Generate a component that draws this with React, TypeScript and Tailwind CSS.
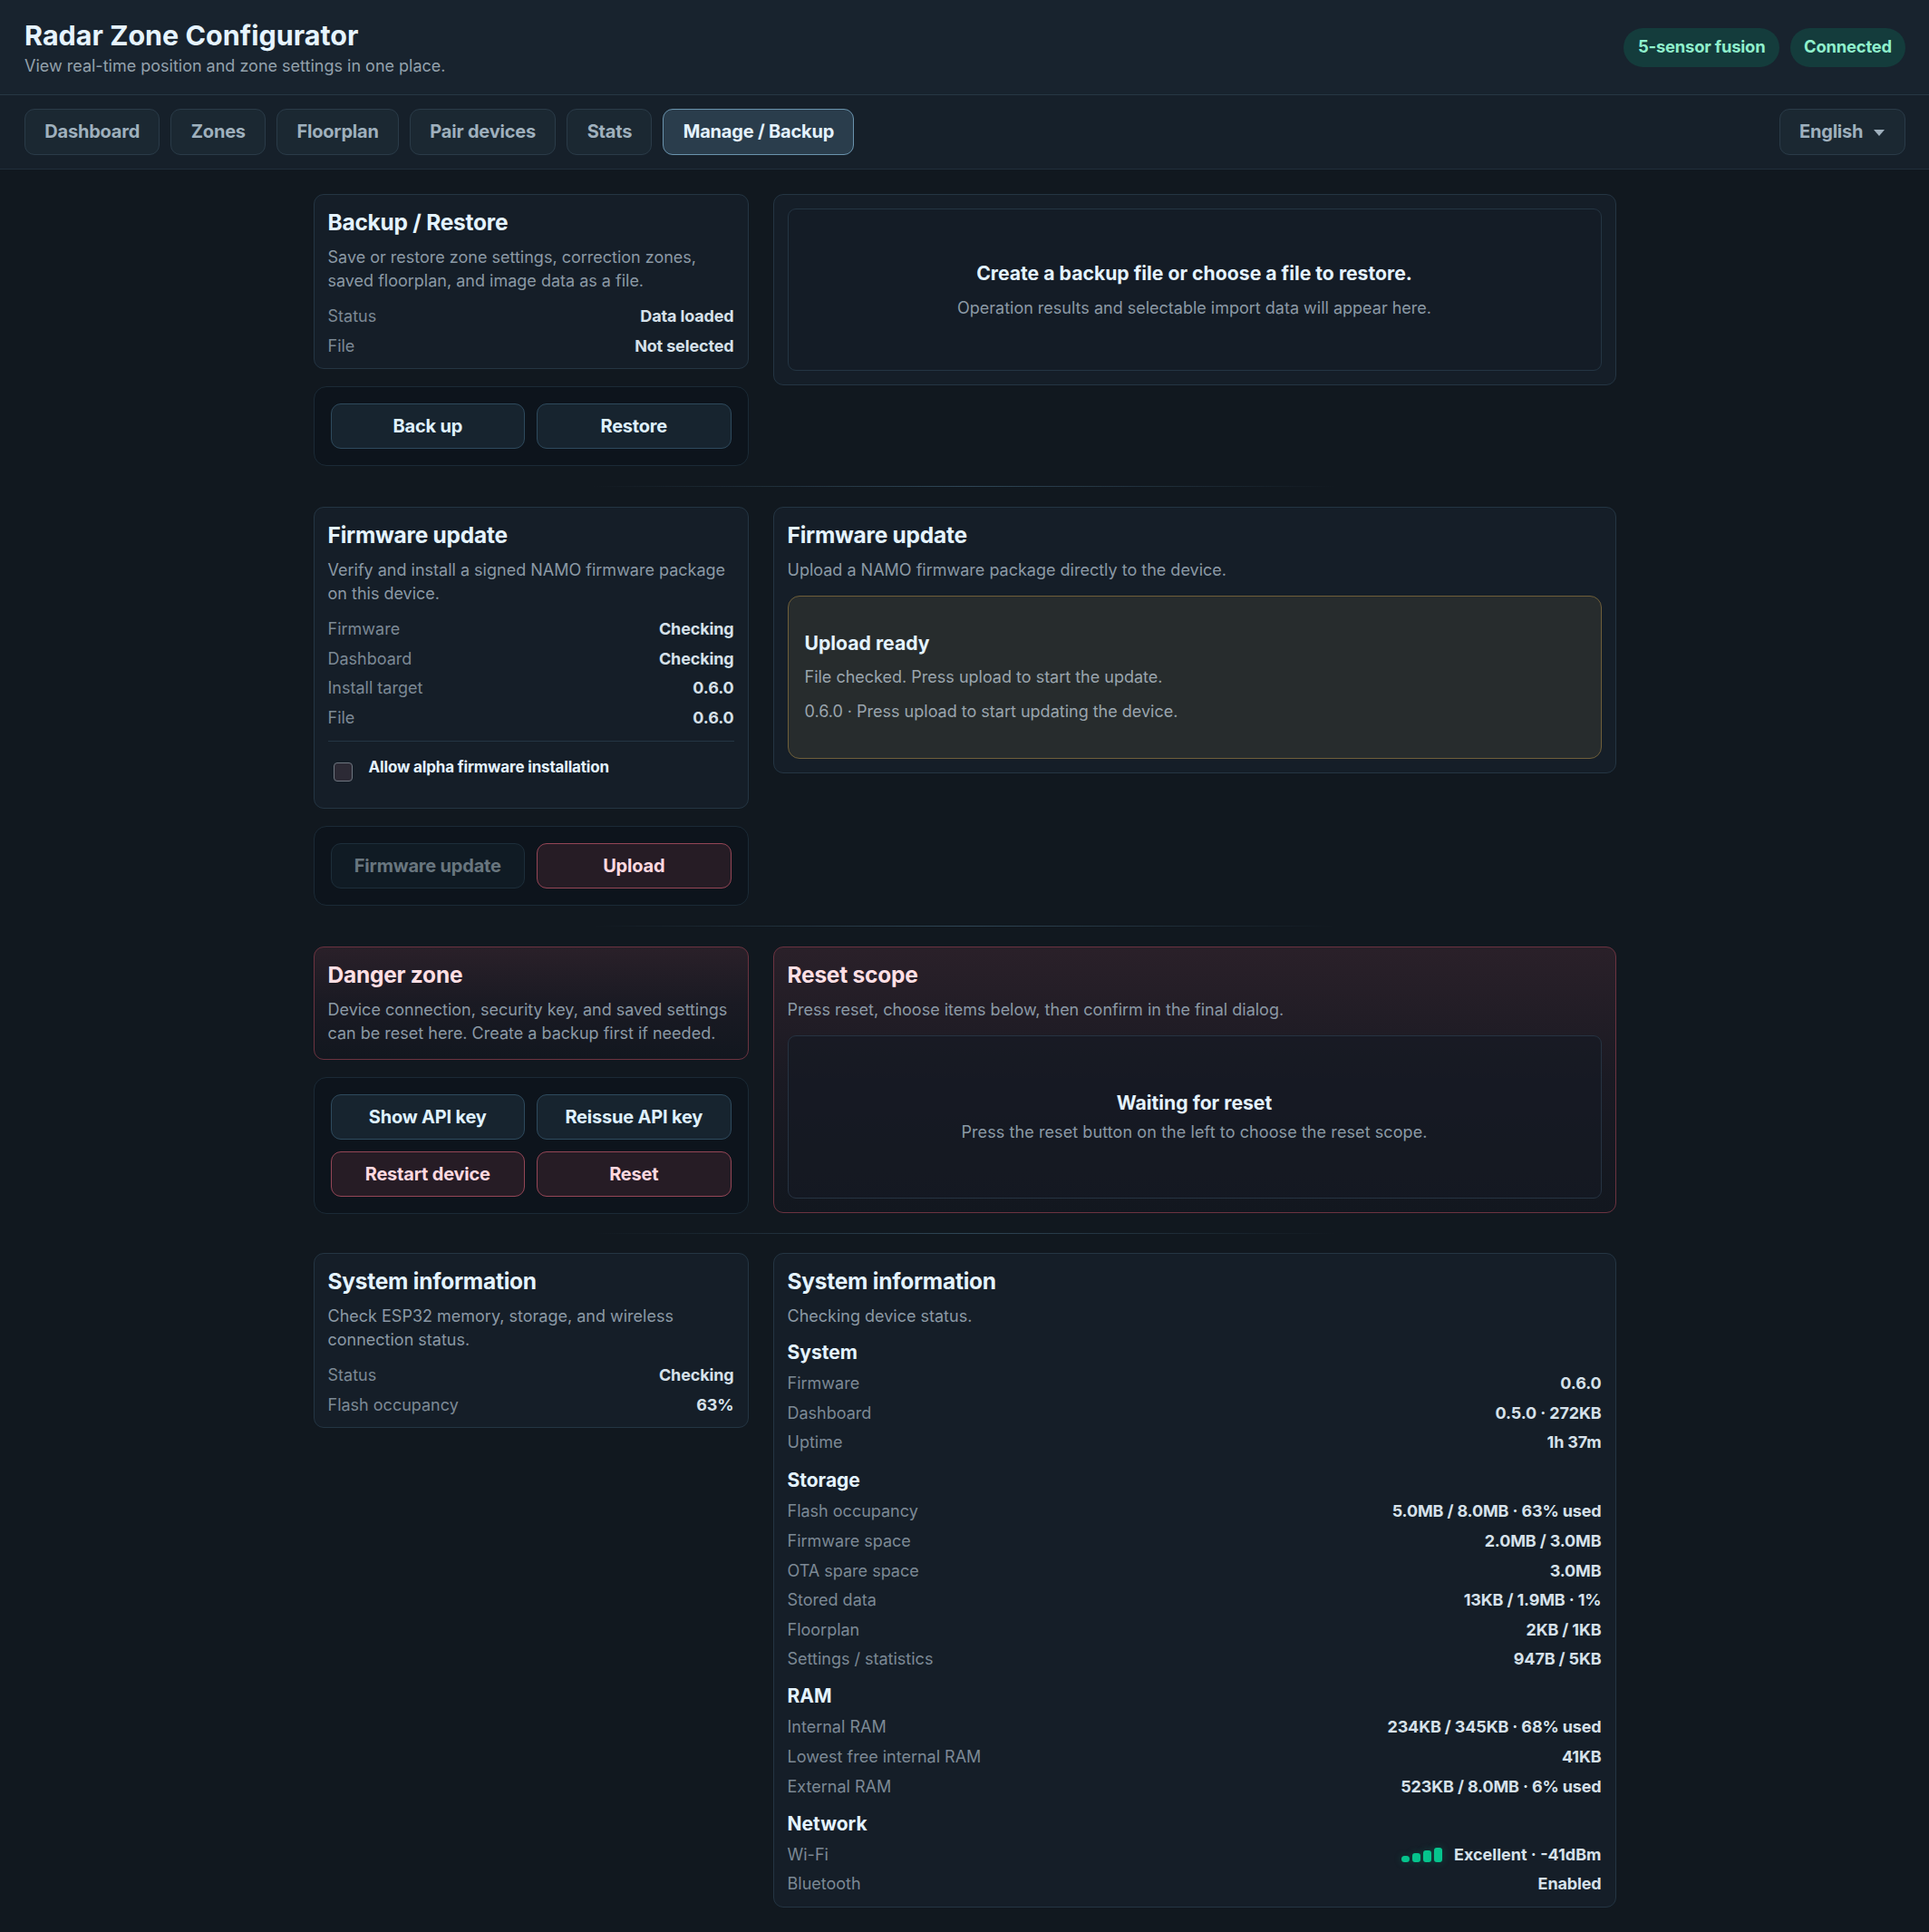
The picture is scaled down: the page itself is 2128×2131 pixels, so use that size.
import { ReactNode } from "react"

const tabs = ["Dashboard", "Zones", "Floorplan", "Pair devices", "Stats", "Manage / Backup"]

function Card({ danger, className = "", children }: { danger?: boolean; className?: string; children: ReactNode }) {
  return (
    <div
      className={`rounded-[11px] border p-[15px] ${
        danger
          ? "border-[#6b3340] bg-gradient-to-b from-[#2a2029] via-[#1a1a23] to-[#12171f]"
          : "border-[#243543] bg-[#151e28]"
      } ${className}`}
    >
      {children}
    </div>
  )
}

function Title({ danger, children }: { danger?: boolean; children: ReactNode }) {
  return (
    <h2 className={`text-[24.5px] leading-[30px] font-bold tracking-[-0.01em] ${danger ? "text-[#ffdfe4]" : "text-[#e4f3ff]"}`}>
      {children}
    </h2>
  )
}

function Desc({ children }: { children: ReactNode }) {
  return <p className="mt-[11px] text-[18px] leading-[26px] text-[#8b99a5]">{children}</p>
}

function Row({ label, children }: { label: string; children: ReactNode }) {
  return (
    <div className="flex h-[20px] items-center justify-between text-[18px] leading-[20px]">
      <span className="text-[#7c8995]">{label}</span>
      <span className="flex items-center font-bold tracking-[-0.008em] text-[#d6e1ea]">{children}</span>
    </div>
  )
}

function Rows({ children, className = "" }: { children: ReactNode; className?: string }) {
  return <div className={`flex flex-col gap-[12.6px] ${className}`}>{children}</div>
}

function Btn({ kind = "normal", children }: { kind?: "normal" | "danger" | "off"; children: ReactNode }) {
  const tone =
    kind === "danger"
      ? "border-[#944656] bg-[#261c25] text-[#ffd9e0]"
      : kind === "off"
        ? "border-[#1d2e3a] bg-[#101b24] text-[#69767f]"
        : "border-[#2e4a5d] bg-[#17242f] text-[#dff1ff]"
  return (
    <button type="button" className={`h-[50px] rounded-[11px] border text-[20px] font-bold tracking-[-0.01em] ${tone}`}>
      {children}
    </button>
  )
}

function Actions({ children }: { children: ReactNode }) {
  return (
    <div className="grid grid-cols-2 gap-[13px] rounded-[14px] border border-[#1b2a36] bg-[#0d141c] p-[18px]">
      {children}
    </div>
  )
}

function Section({ left, right }: { left: ReactNode; right: ReactNode }) {
  return (
    <div className="grid grid-cols-[480px_930px] items-start gap-[27px]">
      <div className="flex flex-col gap-[19px]">{left}</div>
      <div>{right}</div>
    </div>
  )
}

function Divider({ className = "my-[22px]" }: { className?: string }) {
  return (
    <div className={`mx-auto h-px w-[820px] bg-gradient-to-r from-transparent via-[#2f4656] to-transparent ${className}`} />
  )
}

function Signal() {
  return (
    <span className="mr-[13px] flex items-end gap-[3px]">
      <span className="h-[7px] w-[9px] rounded-[4px] bg-[#06c48d] shadow-[0_0_8px_rgba(6,196,141,0.25)]" />
      <span className="h-[10px] w-[9px] rounded-[3px] bg-[#06c48d] shadow-[0_0_8px_rgba(6,196,141,0.25)]" />
      <span className="h-[13px] w-[9px] rounded-[3px] bg-[#06c48d] shadow-[0_0_8px_rgba(6,196,141,0.25)]" />
      <span className="h-[16px] w-[9px] rounded-[3px] bg-[#06c48d] shadow-[0_0_8px_rgba(6,196,141,0.25)]" />
    </span>
  )
}

function Group({ title, className, children }: { title: string; className: string; children: ReactNode }) {
  return (
    <div className={className}>
      <h3 className="text-[21px] leading-[28px] font-bold text-[#e4f3ff]">{title}</h3>
      <Rows className="mt-[10px]">{children}</Rows>
    </div>
  )
}

export default function App() {
  return (
    <div className="min-h-[2131px] bg-[#11181f] font-['Inter',sans-serif]">
      <header className="flex h-[105px] items-center justify-between border-b border-[#263744] bg-[#18232e] pr-[26px] pl-[27px]">
        <div className="mt-[2px]">
          <h1 className="text-[30.5px] leading-[36px] font-bold text-[#e6f4ff]">Radar Zone Configurator</h1>
          <p className="mt-[3px] text-[18px] leading-[26px] text-[#93a1ac]">View real-time position and zone settings in one place.</p>
        </div>
        <div className="flex gap-[12px]">
          <span className="flex h-[43px] items-center rounded-full bg-[#143c3c] px-[15.5px] text-[18.4px] font-bold tracking-[-0.01em] text-[#8ff0cc]">
            5-sensor fusion
          </span>
          <span className="flex h-[43px] items-center rounded-full bg-[#143c3c] px-[15px] text-[18.4px] font-bold tracking-[-0.01em] text-[#8ff0cc]">
            Connected
          </span>
        </div>
      </header>

      <nav className="flex items-center justify-between border-b border-[#212f3b] bg-[#16202a] py-[15px] pr-[26px] pl-[27px]">
        <div className="flex gap-[12px]">
          {tabs.map((tab) => (
            <button
              key={tab}
              type="button"
              className={`h-[51px] rounded-[11px] border px-[21.3px] pb-[1px] text-[20px] font-bold tracking-[-0.01em] ${
                tab === "Manage / Backup"
                  ? "border-[#6a93ad] bg-[#2a3d4c] text-[#e4f2ff]"
                  : "border-[#2a3b48] bg-[#1b2832] text-[#9fb0bd]"
              }`}
            >
              {tab}
            </button>
          ))}
        </div>
        <button
          type="button"
          className="flex h-[51px] w-[139px] items-center rounded-[11px] border border-[#2a3b48] bg-[#1b2832] pb-[1px] pl-[21px] text-[20px] font-bold tracking-[-0.01em] text-[#9fb0bd]"
        >
          English
          <svg className="mt-[2px] ml-[12px]" width="12" height="7" viewBox="0 0 12 7">
            <path d="M0 0h12L6 7z" fill="#9fb0bd" />
          </svg>
        </button>
      </nav>

      <main className="mx-auto w-[1437px] pt-[27px] pb-[27px]">
        <Section
          left={
            <>
              <Card>
                <Title>Backup / Restore</Title>
                <Desc>
                  Save or restore zone settings, correction zones,
                  <br />
                  saved floorplan, and image data as a file.
                </Desc>
                <Rows className="mt-[16px] -mb-[0.6px]">
                  <Row label="Status">Data loaded</Row>
                  <Row label="File">Not selected</Row>
                </Rows>
              </Card>
              <Actions>
                <Btn>Back up</Btn>
                <Btn>Restore</Btn>
              </Actions>
            </>
          }
          right={
            <Card>
              <div className="flex h-[179px] flex-col items-center justify-center rounded-[9px] border border-[#243543] bg-[#141c26]">
                <h3 className="text-[21.2px] leading-[28px] font-bold text-[#e4f3ff]">Create a backup file or choose a file to restore.</h3>
                <p className="mt-[12px] text-[18px] leading-[26px] text-[#8b99a5]">
                  Operation results and selectable import data will appear here.
                </p>
              </div>
            </Card>
          }
        />
        <Divider />
        <Section
          left={
            <>
              <Card>
                <Title>Firmware update</Title>
                <Desc>
                  Verify and install a signed NAMO firmware package
                  <br />
                  on this device.
                </Desc>
                <Rows className="mt-[16px] -mb-[0.6px]">
                  <Row label="Firmware">Checking</Row>
                  <Row label="Dashboard">Checking</Row>
                  <Row label="Install target">0.6.0</Row>
                  <Row label="File">0.6.0</Row>
                </Rows>
                <div className="mt-[16px] flex items-start border-t border-[#243543] pt-[16px] pb-[13.4px]">
                  <span className="mt-[7px] ml-[6px] size-[21px] rounded-[4px] border border-[#6e7680] bg-[#2c2a35]" />
                  <span className="ml-[18px] text-[17px] leading-[24px] font-bold tracking-[-0.01em] text-[#e4f3ff]">
                    Allow alpha firmware installation
                  </span>
                </div>
              </Card>
              <Actions>
                <Btn kind="off">Firmware update</Btn>
                <Btn kind="danger">Upload</Btn>
              </Actions>
            </>
          }
          right={
            <Card>
              <Title>Firmware update</Title>
              <Desc>Upload a NAMO firmware package directly to the device.</Desc>
              <div className="mt-[15px] flex h-[180px] flex-col justify-center rounded-[13px] border border-[#6f5f3a] bg-[#272c2d] px-[18px] pb-[1px]">
                <h3 className="text-[21.2px] leading-[28px] font-bold text-[#e4f3ff]">Upload ready</h3>
                <p className="mt-[11px] text-[18px] leading-[26px] text-[#9aa5ad]">File checked. Press upload to start the update.</p>
                <p className="mt-[12px] text-[18px] leading-[26px] text-[#9aa5ad]">0.6.0 · Press upload to start updating the device.</p>
              </div>
            </Card>
          }
        />
        <Divider />
        <Section
          left={
            <>
              <Card danger>
                <Title danger>Danger zone</Title>
                <Desc>
                  Device connection, security key, and saved settings
                  <br />
                  can be reset here. Create a backup first if needed.
                </Desc>
              </Card>
              <Actions>
                <Btn>Show API key</Btn>
                <Btn>Reissue API key</Btn>
                <Btn kind="danger">Restart device</Btn>
                <Btn kind="danger">Reset</Btn>
              </Actions>
            </>
          }
          right={
            <Card danger>
              <Title danger>Reset scope</Title>
              <Desc>Press reset, choose items below, then confirm in the final dialog.</Desc>
              <div className="mt-[15px] flex h-[180px] flex-col items-center justify-center rounded-[9px] border border-[#263342] bg-[#151a24]/70">
                <h3 className="text-[21.2px] leading-[28px] font-bold text-[#e4f3ff]">Waiting for reset</h3>
                <p className="mt-[6px] text-[18px] leading-[26px] tracking-[0.005em] text-[#8b99a5]">
                  Press the reset button on the left to choose the reset scope.
                </p>
              </div>
            </Card>
          }
        />
        <Divider className="mt-[21px] mb-[21.6px]" />
        <Section
          left={
            <Card>
              <Title>System information</Title>
              <Desc>
                Check ESP32 memory, storage, and wireless
                <br />
                connection status.
              </Desc>
              <Rows className="mt-[16px] -mb-[0.6px]">
                <Row label="Status">Checking</Row>
                <Row label="Flash occupancy">63%</Row>
              </Rows>
            </Card>
          }
          right={
            <Card>
              <Title>System information</Title>
              <Desc>Checking device status.</Desc>
              <Group title="System" className="mt-[13px]">
                <Row label="Firmware">0.6.0</Row>
                <Row label="Dashboard">0.5.0 · 272KB</Row>
                <Row label="Uptime">1h 37m</Row>
              </Group>
              <Group title="Storage" className="mt-[18px]">
                <Row label="Flash occupancy">5.0MB / 8.0MB · 63% used</Row>
                <Row label="Firmware space">2.0MB / 3.0MB</Row>
                <Row label="OTA spare space">3.0MB</Row>
                <Row label="Stored data">13KB / 1.9MB · 1%</Row>
                <Row label="Floorplan">2KB / 1KB</Row>
                <Row label="Settings / statistics">947B / 5KB</Row>
              </Group>
              <Group title="RAM" className="mt-[17px]">
                <Row label="Internal RAM">234KB / 345KB · 68% used</Row>
                <Row label="Lowest free internal RAM">41KB</Row>
                <Row label="External RAM">523KB / 8.0MB · 6% used</Row>
              </Group>
              <Group title="Network" className="mt-[17px]">
                <Row label="Wi-Fi">
                  <Signal />
                  <span className="tracking-normal">Excellent · -41dBm</span>
                </Row>
                <Row label="Bluetooth">Enabled</Row>
              </Group>
            </Card>
          }
        />
      </main>
    </div>
  )
}
